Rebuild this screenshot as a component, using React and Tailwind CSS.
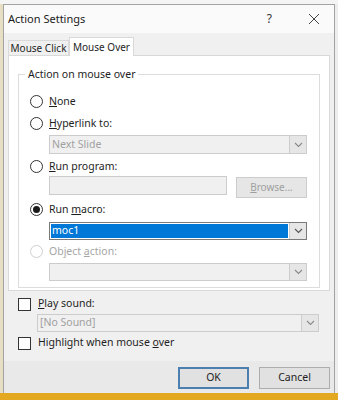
import React from 'react';

const font = { fontFamily: '"Noto Sans", "Open Sans", sans-serif' };

const Chevron = ({ muted }) => (
  <svg width="9" height="6" viewBox="0 0 9 6" fill="none">
    <path d="M1 1l3.5 3.5L8 1" stroke={muted ? '#8a8a8a' : '#555'} strokeWidth="1.1" />
  </svg>
);

const Radio = ({ checked, disabled }) => (
  <span
    className={`flex h-[13px] w-[13px] shrink-0 items-center justify-center rounded-full border bg-white ${
      disabled ? 'border-[#cfcfcf]' : 'border-[#333333]'
    }`}
  >
    {checked ? <span className="h-[7px] w-[7px] rounded-full bg-[#1a1a1a]" /> : null}
  </span>
);

const Checkbox = () => (
  <span className="h-[13px] w-[13px] shrink-0 border border-[#333333] bg-white" />
);

const Combo = ({ width, height, children, selected }) => (
  <div
    className={`flex shrink-0 border ${selected ? 'border-[#7a7a7a] bg-white' : 'border-[#cccccc] bg-[#f0f0f0]'}`}
    style={{ width, height }}
  >
    <div className="flex flex-1 items-center p-[1px]">
      {selected ? (
        <span className="flex h-full w-full items-center bg-[#0078d7] pl-[1px] text-[10.5px] text-white">
          {children}
        </span>
      ) : (
        <span className="pl-[1px] text-[10.5px] text-[#a0a0a0]">{children}</span>
      )}
    </div>
    <div className="flex w-[17px] items-center justify-center border-l border-[#cccccc] bg-[#e6e6e6]">
      <Chevron muted={!selected} />
    </div>
  </div>
);

const OptionRow = ({ checked, disabled, children }) => (
  <div className="flex h-[16px] items-center gap-[6px] pl-[11px]">
    <Radio checked={checked} disabled={disabled} />
    <span className={`text-[10.5px] leading-none ${disabled ? 'text-[#a6a6a6]' : 'text-[#1e1e1e]'}`}>
      {children}
    </span>
  </div>
);

export default function App() {
  return (
    <div className="flex h-[400px] w-[338px] flex-col overflow-hidden bg-[#ececec]" style={font}>
      <div className="h-[4px] shrink-0 bg-[#f4f4f4]" />
      <div className="flex h-[389px] shrink-0">
        <div className="w-[3px] bg-[#e6dfc4]" />
        <div className="flex w-[332px] flex-col border-x border-t border-[#a3a3a3]">
          {/* title bar */}
          <div className="flex h-[28px] shrink-0 items-center bg-[#fafafa] pl-[4px]">
            <span className="text-[11px] text-[#1a1a1a]">Action Settings</span>
            <span className="ml-auto mr-[36px] text-[12px] text-[#333]">?</span>
            <svg width="12" height="12" viewBox="0 0 12 12" className="mr-[14px]">
              <path d="M1 1l10 10M11 1L1 11" stroke="#444" strokeWidth="1" />
            </svg>
          </div>

          {/* body */}
          <div className="flex flex-1 flex-col bg-[#f0f0f0]">
            <div className="flex px-[4px] pt-[4px]">
              <div className="mt-[3px] flex h-[15px] w-[61px] items-center justify-center whitespace-nowrap border border-b-0 border-[#d9d9d9] bg-[#f0f0f0] text-[10px] text-[#1e1e1e]">
                Mouse Click
              </div>
              <div className="relative z-10 -mb-[1px] flex h-[19px] w-[65px] items-center justify-center whitespace-nowrap border border-b-0 border-[#d9d9d9] bg-white text-[10px] text-[#1e1e1e]">
                Mouse Over
              </div>
            </div>

            <div className="mx-[4px] h-[236px] border border-[#d9d9d9] bg-white pt-[10px]">
              <fieldset className="ml-[9px] h-[222px] w-[302px] border border-[#dcdcdc] px-0">
                <legend className="ml-[6px] px-[3px] text-[10.5px] leading-[16px] text-[#1e1e1e]">
                  Action on mouse over
                </legend>
                <div className="flex flex-col">
                  <div className="mt-[11px]">
                    <OptionRow>
                      <u>N</u>one
                    </OptionRow>
                  </div>
                  <div className="mt-[6px]">
                    <OptionRow>
                      <u>H</u>yperlink to:
                    </OptionRow>
                  </div>
                  <div className="ml-[30px] mt-[4px]">
                    <Combo width={258} height={19}>Next Slide</Combo>
                  </div>
                  <div className="mt-[4px]">
                    <OptionRow>
                      <u>R</u>un program:
                    </OptionRow>
                  </div>
                  <div className="ml-[30px] mt-[2px] flex h-[22px] items-start gap-[9px]">
                    <div className="h-[19px] w-[178px] border border-[#cccccc] bg-[#f0f0f0]" />
                    <div className="mt-[1px] flex h-[21px] w-[71px] items-center justify-center border border-[#cccccc] bg-[#e6e6e6] text-[10px] text-[#a0a0a0]">
                      <span>
                        <u>B</u>rowse...
                      </span>
                    </div>
                  </div>
                  <div className="mt-[3px]">
                    <OptionRow checked>
                      Run <u>m</u>acro:
                    </OptionRow>
                  </div>
                  <div className="ml-[30px] mt-[5px]">
                    <Combo width={258} height={18} selected>
                      moc1
                    </Combo>
                  </div>
                  <div className="mt-[3px]">
                    <OptionRow disabled>
                      Object <u>a</u>ction:
                    </OptionRow>
                  </div>
                  <div className="ml-[30px] mt-[4px]">
                    <Combo width={258} height={18} />
                  </div>
                </div>
              </fieldset>
            </div>

            <div className="flex flex-col pl-[14px]">
              <div className="mt-[5px] flex h-[16px] items-center gap-[7px]">
                <Checkbox />
                <span className="text-[10.5px] text-[#1e1e1e]">
                  <u>P</u>lay sound:
                </span>
              </div>
              <div className="ml-[19px] mt-[2px]">
                <Combo width={282} height={18}>[No Sound]</Combo>
              </div>
              <div className="mt-[3px] flex h-[16px] items-center gap-[7px]">
                <Checkbox />
                <span className="text-[10.5px] text-[#1e1e1e]">
                  Highlight when mouse <u>o</u>ver
                </span>
              </div>
            </div>

            <div className="mt-[10px] flex flex-1 items-start justify-end gap-[10px] bg-[#e9e9e9] pr-[4px] pt-[6px]">
              <button
                type="button"
                className="flex h-[22px] w-[71px] items-center justify-center border-2 border-[#4a7fb0] bg-[#e1e1e1] text-[10.5px] text-[#1e1e1e]"
              >
                OK
              </button>
              <button
                type="button"
                className="flex h-[22px] w-[71px] items-center justify-center border border-[#adadad] bg-[#e1e1e1] text-[10.5px] text-[#1e1e1e]"
              >
                Cancel
              </button>
            </div>
          </div>
        </div>
        <div className="flex-1 bg-[#ededed]" />
      </div>
      <div className="flex-1 bg-[#e3a81f]" />
    </div>
  );
}
